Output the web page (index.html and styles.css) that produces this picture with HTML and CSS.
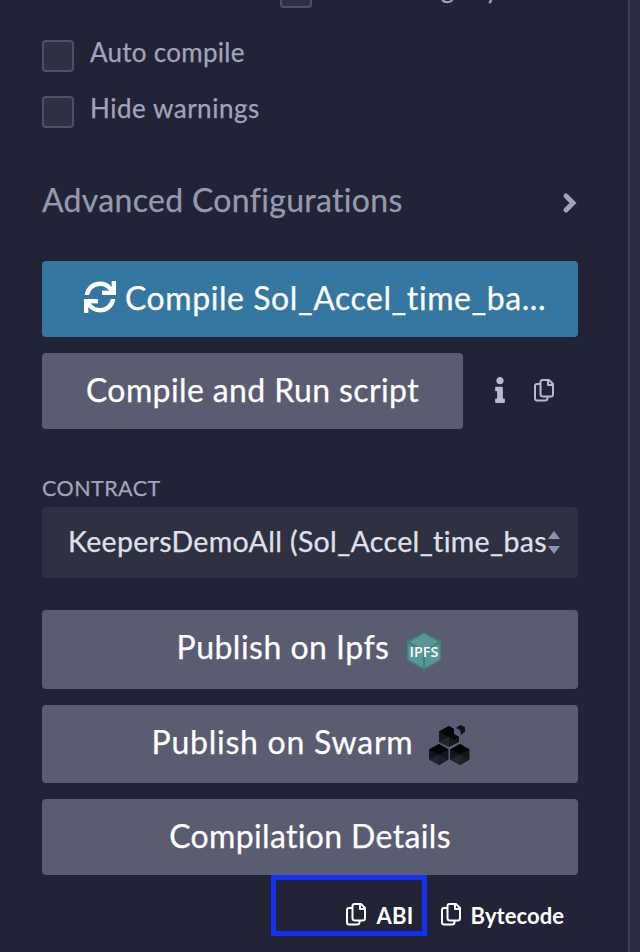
FILE: index.html
```html
<!DOCTYPE html>
<html lang="en">
<head>
<meta charset="utf-8">
<title>Solidity compiler</title>
<link rel="stylesheet" href="styles.css">
</head>
<body>
<svg class="defs" aria-hidden="true">
  <symbol id="copy" viewBox="0 0 20 23">
    <path d="M6 5H3Q1 5 1 7V19Q1 21.500 3 21.500H11Q13.500 21.500 13.500 19V17.500M8.500 1H15L19 5V15Q19 17.500 17 17.500H9Q6.500 17.500 6.500 15V3Q6.500 1 8.500 1ZM14 1.500V6H18.500" fill="none" stroke="currentColor" stroke-width="2" stroke-linejoin="round"/>
  </symbol>
</svg>
<main class="panel">
  <div class="check nightly"><span class="box"></span><span class="t label nightlytext">Include nightly builds</span></div>
  <div class="check"><span class="box"></span><span class="t label auto">Auto compile</span></div>
  <div class="check"><span class="box"></span><span class="t label hide">Hide warnings</span></div>
  <div class="advanced">
    <span class="t adv">Advanced Configurations</span>
    <svg class="chevron" viewBox="0 0 14 20"><path d="M3 3L10 10L3 17" fill="none" stroke="currentColor" stroke-width="5" stroke-linecap="round" stroke-linejoin="miter"/></svg>
  </div>
  <button class="btn primary">
    <svg class="sync" viewBox="0 0 512 512"><path fill="currentColor" d="M440.65 12.57l4 82.77A247.16 247.16 0 0 0 255.83 8C134.73 8 33.91 94.92 12.29 209.820A12 12 0 0 0 24.090 224h49.050a12 12 0 0 0 11.670-9.260 175.910 175.910 0 0 1 317-56.940l-101.460-4.860a12 12 0 0 0-12.570 12v47.410a12 12 0 0 0 12 12H500a12 12 0 0 0 12-12V12a12 12 0 0 0-12-12h-47.370a12 12 0 0 0-11.980 12.570zM255.830 432a175.610 175.610 0 0 1-146-77.800l101.800 4.870a12 12 0 0 0 12.570-12v-47.400a12 12 0 0 0-12-12H12a12 12 0 0 0-12 12V500a12 12 0 0 0 12 12h47.350a12 12 0 0 0 12-12.600l-4.150-82.570A247.170 247.170 0 0 0 255.830 504c121.110 0 221.930-86.920 243.550-201.820a12 12 0 0 0-11.800-14.180h-49.050a12 12 0 0 0-11.670 9.260A175.860 175.860 0 0 1 255.830 432z"/></svg>
    <span class="t compile">Compile Sol_Accel_time_ba...</span>
  </button>
  <div class="runrow">
    <button class="btn run"><span class="t runtext">Compile and Run script</span></button>
    <svg class="info" viewBox="0 0 192 512"><path fill="currentColor" d="M20 424.229h20V279.771H20c-11.046 0-20-8.954-20-20V212c0-11.046 8.954-20 20-20h112c11.046 0 20 8.954 20 20v212.229h20c11.046 0 20 8.954 20 20V492c0 11.046-8.954 20-20 20H20c-11.046 0-20-8.954-20-20v-47.771c0-11.046 8.954-20 20-20zM96 0C56.235 0 24 32.235 24 72s32.235 72 72 72 72-32.235 72-72S135.764 0 96 0z"/></svg>
    <svg class="copy"><use href="#copy"/></svg>
  </div>
  <div class="caption"><span class="t contract">CONTRACT</span></div>
  <div class="select">
    <span class="t value">KeepersDemoAll (Sol_Accel_time_bas</span>
    <svg class="arrows" viewBox="0 0 12 23"><path d="M0 8L6 0L12 8ZM0 15H12L6 23Z" fill="currentColor"/></svg>
  </div>
  <button class="btn ipfs"><span class="t pubipfs">Publish on Ipfs</span>
    <svg class="ipfslogo" viewBox="0 0 34 38"><path d="M17 0L34 9.500V28.500L17 38L0 28.500V9.500Z" fill="#438080"/><path d="M17 1.500L31 10L17 18L3 10ZM1.500 12L16 20V35.500L1.500 27.500ZM32.500 12L18 20V35.500L32.500 27.500Z" fill="#5b9796"/><text x="17" y="24.500" text-anchor="middle" textLength="29" lengthAdjust="spacingAndGlyphs">IPFS</text></svg>
  </button>
  <button class="btn swarm"><span class="t pubswarm">Publish on Swarm</span>
    <svg class="swarmlogo" viewBox="0 0 41 40">
      <g id="hex"><path d="M10 19L19.500 24.500V34.500L10 40L0 34.500V24.500Z" fill="#15161b"/><path d="M10 19L19.500 24.500L10 29.500L0 24.500Z" fill="#050507"/><path d="M0 34.500L10 29.500V40Z" fill="#25262d"/><path d="M10 29.500L19.500 34.500L10 40Z" fill="#1d1e24"/></g>
      <use href="#hex" x="21"/>
      <path d="M20 1L25 4V9L30 12V17L20 22L10 17V6.500Z" fill="#15161b"/><path d="M20 1L25 4V9L20 12L10 6.500Z" fill="#050507"/><path d="M10 17L20 12V22Z" fill="#25262d"/><path d="M20 12L25 9L30 12L25 15Z" fill="#08080b"/>
      <path d="M31 0L36 2V7L32 10L31 5L27 3Z" fill="#111217"/>
    </svg>
  </button>
  <button class="btn details"><span class="t det">Compilation Details</span></button>
  <div class="links">
    <span class="link"><svg class="copy"><use href="#copy"/></svg><span class="t abi">ABI</span></span>
    <span class="link"><svg class="copy"><use href="#copy"/></svg><span class="t byte">Bytecode</span></span>
    <span class="highlight"></span>
  </div>
</main>
</body>
</html>
```
FILE: styles.css
```css
* { box-sizing: border-box; }
body { margin: 0; background: #2a2c3f; font-family: Lato, "Liberation Sans", sans-serif; }
.defs { position: absolute; width: 0; height: 0; }
svg { display: block; flex: none; overflow: visible; }
.t { white-space: nowrap; font-variant-ligatures: none; -webkit-text-stroke: 0.25px currentColor; }
.panel { width: 630px; height: 952px; overflow: hidden; padding: 0 50px 0 42px; background: #222336; border-right: 2px solid #3f4055; color: #a2a3bd; }
.check { display: flex; gap: 16px; height: 56px; padding-top: 8px; }
.check.nightly { height: 32px; padding: 0 0 0 238px; transform: translateY(-24px); }
.box { width: 32px; height: 32px; flex: none; background: #2f3042; border: 2px solid #4f5066; border-radius: 4px; }
.label { font-size: 26px; line-height: 32px; margin-top: -4px; }
.nightlytext { letter-spacing: 0.25px; }
.auto { letter-spacing: 0.27px; }
.hide { letter-spacing: 0.52px; }
.advanced { display: flex; justify-content: space-between; align-items: center; height: 54px; margin-top: 28px; }
.adv { font-size: 32px; letter-spacing: 0.31px; color: #959bad; }
.chevron { width: 14px; height: 20px; margin: 7px 1px 0 0; }
.btn { display: flex; align-items: center; justify-content: center; width: 536px; border: 0; border-radius: 4px; padding: 0; background: #5a5c71; color: #fff; font: 32px Lato, "Liberation Sans", sans-serif; }
.btn .t { margin-bottom: 4px; }
.primary { height: 76px; background: #3477a0; margin-top: 35px; padding: 0 0 4px 10px; gap: 9px; }
.btn .compile { margin-bottom: 0; letter-spacing: 0.56px; }
.sync { width: 32px; height: 32px; }
.runrow { display: flex; align-items: center; margin: 16px 0; height: 76px; color: #babbcc; }
.run { width: 421px; height: 76px; }
.runtext { letter-spacing: 0.39px; }
.info { width: 10px; height: 26px; margin: 0 0 3px 32px; }
.runrow .copy { margin: 0 0 2px 29px; }
.copy { width: 20px; height: 23px; }
.caption { font-size: 21.5px; line-height: 26px; margin-top: 46px; }
.contract { letter-spacing: 0.45px; }
.select { display: flex; align-items: center; height: 71px; padding: 0 16px 0 26px; margin: 6px 0 32px; background: #2f3042; border-radius: 4px; color: #dfe1ea; font-size: 28.5px; }
.value { width: 480px; overflow: hidden; flex: none; margin-bottom: 4px; letter-spacing: 0.34px; }
.arrows { width: 12px; height: 23px; color: #8c93b2; }
.ipfs { height: 79px; margin-bottom: 16px; padding-right: 2px; gap: 18px; }
.ipfs .pubipfs { margin-bottom: 7px; letter-spacing: 0.48px; }
.ipfslogo { width: 34px; height: 38px; margin-top: 3px; }
.ipfslogo text { font: 600 15px "Open Sans", sans-serif; fill: #fff; }
.swarm { height: 78px; margin-bottom: 16px; padding-left: 2px; gap: 16px; }
.swarm .pubswarm { margin-bottom: 5px; letter-spacing: 0.75px; }
.swarmlogo { width: 41px; height: 40px; margin-top: 2px; }
.details { height: 76px; }
.det { letter-spacing: 0.35px; }
.links { display: flex; position: relative; justify-content: flex-end; gap: 27px; padding: 28px 14px 0 0; color: #fff; font-size: 22px; font-weight: 700; line-height: 26px; }
.links .t { -webkit-text-stroke: 0; }
.link { display: flex; align-items: center; gap: 10px; }
.link .copy { margin-bottom: 3px; }
.abi { letter-spacing: 0.3px; }
.byte { letter-spacing: 0.05px; }
.highlight { position: absolute; left: 228.5px; top: 0; width: 156px; height: 61px; border: 5px solid #1430f5; }
```
